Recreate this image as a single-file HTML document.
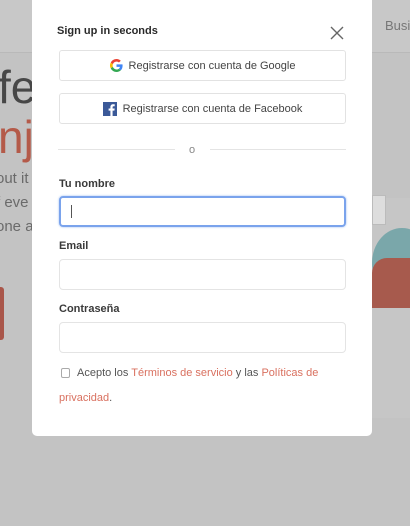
<!DOCTYPE html>
<html><head><meta charset="utf-8"><style>
*{box-sizing:border-box;margin:0;padding:0}
body{width:410px;height:526px;overflow:hidden;background:#c3c3c3;font-family:"Liberation Sans",sans-serif;position:relative}
.hdr{position:absolute;left:0;top:0;width:410px;height:53px;background:#c8c8c8;border-bottom:1px solid #b9b9b9}
.busi{position:absolute;left:385px;top:18px;font-size:13px;color:#777}
.big{position:absolute;left:-2px;font-size:46px;color:#474747}
.txt{position:absolute;left:-4px;font-size:15px;color:#6a6a6a}
.redbtn{position:absolute;left:-10px;top:287px;width:14px;height:53px;background:#a9564a;border-radius:3px}
.art{position:absolute;left:372px;top:198px;width:38px;height:220px;background:#cdcdcd}
.modal{position:absolute;left:32px;top:-6px;width:340px;height:442px;background:#fff;border-radius:5px}
.title{position:absolute;left:25px;font-size:11px;font-weight:bold;color:#2a2a2a}
.close{position:absolute;left:298px;top:32px}
.btn{position:absolute;left:27px;width:287px;height:31px;border:1px solid #e2e2e2;border-radius:3px;font-size:11px;color:#444;display:flex;align-items:center;justify-content:center;gap:6px}
.lbl{position:absolute;left:27px;font-size:11px;font-weight:bold;color:#3a3a3a}
.inp{position:absolute;left:27px;width:287px;height:31px;border:1px solid #e4e4e4;border-radius:4px}
.a{color:#d9705f}
</style></head><body>
<div class="hdr"><span class="busi">Busi</span></div>
<div class="big" style="top:60px">fe</div>
<div class="big" style="top:110px;color:#b45a49">njc</div>
<div class="txt" style="top:170px">out it</div>
<div class="txt" style="top:194px">f eve</div>
<div class="txt" style="top:218px">one a</div>
<div class="txt" style="top:238px">.</div>
<div class="redbtn"></div>
<div class="art">
<div style="position:absolute;left:0;top:0;width:38px;height:220px;background:#c6c6c6"></div>
<div style="position:absolute;left:0;top:30px;width:60px;height:70px;border-radius:50%;background:#7aa7aa"></div>
<div style="position:absolute;left:0;top:60px;width:38px;height:50px;background:#a75a4d;border-radius:15px 0 0 0"></div>
<div style="position:absolute;left:0;top:-3px;width:14px;height:30px;background:#ddd;border:1px solid #bbb"></div>
</div>
<div class="modal">
<div class="title" style="top:31px">Sign up in seconds</div>
<svg class="close" width="14" height="14" viewBox="0 0 14 14"><path d="M1 1L13 13M13 1L1 13" stroke="#666" stroke-width="1.4"/></svg>
<div class="btn" style="top:56px"><svg width="13" height="13" viewBox="0 0 48 48"><path fill="#EA4335" d="M24 9.5c3.5 0 6.6 1.2 9.1 3.6l6.8-6.8C35.8 2.4 30.3 0 24 0 14.6 0 6.6 5.4 2.7 13.3l7.9 6.1C12.5 13.6 17.8 9.5 24 9.5z"/><path fill="#4285F4" d="M46.5 24.5c0-1.6-.1-3.1-.4-4.5H24v9h12.7c-.6 2.9-2.2 5.4-4.7 7.1l7.6 5.9c4.4-4.1 6.9-10.1 6.9-17.5z"/><path fill="#FBBC05" d="M10.5 28.6c-.5-1.4-.8-3-.8-4.6s.3-3.2.8-4.6l-7.9-6.1C1 16.6 0 20.2 0 24s.9 7.4 2.7 10.7l7.8-6.1z"/><path fill="#34A853" d="M24 48c6.5 0 11.9-2.1 15.9-5.8l-7.6-5.9c-2.1 1.4-4.9 2.3-8.3 2.3-6.2 0-11.5-4.2-13.4-9.9l-7.9 6.1C6.6 42.6 14.6 48 24 48z"/></svg>Registrarse con cuenta de Google</div>
<div class="btn" style="top:99px"><svg width="14" height="14" viewBox="0 0 14 14"><rect width="14" height="14" fill="#3b5998"/><path d="M9.6 14V8.6h1.8l.3-2.1H9.6V5.2c0-.6.2-1 1-1h1.1V2.3c-.2 0-.9-.1-1.6-.1-1.6 0-2.7 1-2.7 2.8v1.5H5.6v2.1h1.8V14z" fill="#fff"/></svg>Registrarse con cuenta de Facebook</div>
<div style="position:absolute;left:26px;top:155px;width:117px;height:1px;background:#e4e4e4"></div>
<div style="position:absolute;left:178px;top:155px;width:136px;height:1px;background:#e4e4e4"></div>
<div style="position:absolute;left:157px;top:150px;font-size:11px;color:#888">o</div>
<div class="lbl" style="top:184px">Tu nombre</div>
<div class="inp" style="top:202px;border:2px solid #7aa3ec;box-shadow:0 0 2px #9bbcf2"><div style="position:absolute;left:10px;top:7px;width:1px;height:13px;background:#555"></div></div>
<div class="lbl" style="top:246px">Email</div>
<div class="inp" style="top:265px"></div>
<div class="lbl" style="top:309px">Contraseña</div>
<div class="inp" style="top:328px"></div>
<div style="position:absolute;left:29px;top:374px;width:9px;height:10px;border:1px solid #aaa;border-radius:2px"></div>
<div style="position:absolute;left:27px;top:367px;width:290px;font-size:11px;color:#555;line-height:25px;text-indent:18px">Acepto los <span class="a">Términos de servicio</span> y las <span class="a">Políticas de privacidad</span>.</div>
</div>
</body></html>
